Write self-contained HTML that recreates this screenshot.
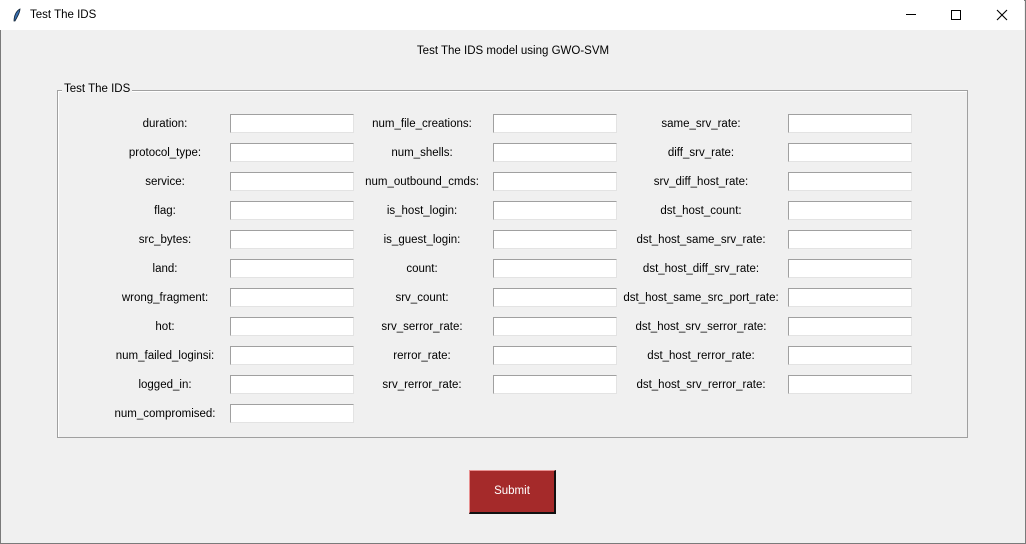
<!DOCTYPE html>
<html><head><style>
*{margin:0;padding:0;box-sizing:border-box}
body{width:1026px;height:544px;background:#f0f0f0;font-family:"Liberation Sans",sans-serif;font-size:11.5px;color:#000;position:relative;overflow:hidden}
.win{position:absolute;left:0;top:0;width:1026px;height:544px;border:1px solid #7a7a7a}
.tb{position:absolute;left:0;top:0;width:1024px;height:30px;background:#fff}
.t{position:absolute;white-space:nowrap}
.lbl{position:absolute;text-align:center;white-space:nowrap;line-height:14px}
.e{position:absolute;width:124px;height:19px;background:#fff;border:1px solid #a0a0a0;border-right-color:#e3e3e3;border-bottom-color:#e3e3e3}
.frame{position:absolute;left:57px;top:90px;width:911px;height:348px;border:1px solid #a0a0a0;box-shadow:1px 1px 0 #fff inset}
.btn{position:absolute;left:469px;top:470px;width:87px;height:44px;background:#a52a2a;border-top:1px solid #e89090;border-left:1px solid #e89090;border-right:2px solid #111;border-bottom:2px solid #111;color:#fff;text-align:center;line-height:40px}
</style></head><body>
<div class="win"></div>
<div class="tb">
<svg class="t" style="left:12px;top:8px" width="10" height="15" viewBox="0 0 10 15"><path d="M8 1 C4 3 2 8 2 13 L3 13 C5 9 8 5 8 1Z" fill="#3a6fb0" stroke="#123" stroke-width="0.8"/></svg>
<div class="t" style="left:30px;top:9px">Test The IDS</div>
<div class="t" style="left:906px;top:14px;width:10px;height:1px;background:#000"></div>
<div class="t" style="left:951px;top:10px;width:10px;height:10px;border:1px solid #000"></div>
<svg class="t" style="left:996px;top:9px" width="12" height="12"><path d="M1 1L11 11M11 1L1 11" stroke="#000" stroke-width="1.1"/></svg>
</div>
<div class="t" style="left:0;width:1026px;text-align:center;top:45px">Test The IDS model using GWO-SVM</div>
<div class="frame"></div>
<div class="t" style="left:62px;top:83px;background:#f0f0f0;padding:0 2px">Test The IDS</div>
<div id="g"></div>
<div class="btn">Submit</div>
<script>
var c1=["duration:","protocol_type:","service:","flag:","src_bytes:","land:","wrong_fragment:","hot:","num_failed_loginsi:","logged_in:","num_compromised:"];
var c2=["num_file_creations:","num_shells:","num_outbound_cmds:","is_host_login:","is_guest_login:","count:","srv_count:","srv_serror_rate:","rerror_rate:","srv_rerror_rate:"];
var c3=["same_srv_rate:","diff_srv_rate:","srv_diff_host_rate:","dst_host_count:","dst_host_same_srv_rate:","dst_host_diff_srv_rate:","dst_host_same_src_port_rate:","dst_host_srv_serror_rate:","dst_host_rerror_rate:","dst_host_srv_rerror_rate:"];
var h="";
function col(a,cx,ex){a.forEach(function(s,i){var y=114+i*29;h+='<div class="lbl" style="left:'+(cx-100)+'px;width:200px;top:'+(y+3)+'px">'+s+'</div><div class="e" style="left:'+ex+'px;top:'+y+'px"></div>';});}
col(c1,165,230);col(c2,422,493);col(c3,701,788);
document.getElementById("g").innerHTML=h;
</script>
</body></html>
